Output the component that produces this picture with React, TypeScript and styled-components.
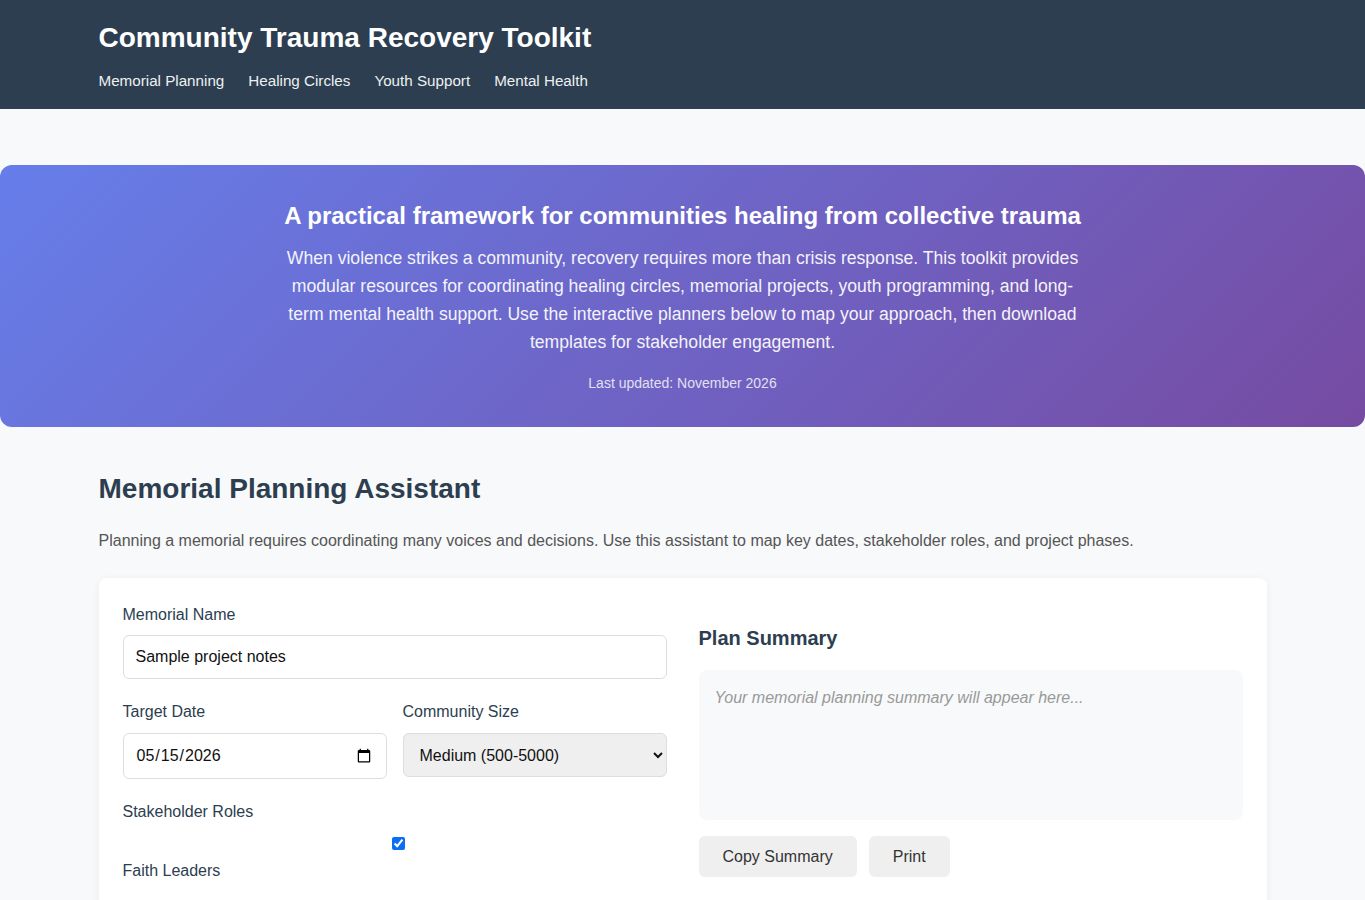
import React from "react";
import styled, { createGlobalStyle } from "styled-components";

const Global = createGlobalStyle`
  * { box-sizing: border-box; }
  html, body { margin: 0; padding: 0; }
  body {
    background: #f8f9fa;
    font-family: "Liberation Sans", Arial, sans-serif;
    color: #333;
    line-height: 1.6;
  }
`;

const Header = styled.header`
  background: #2c3e50;
  color: #fff;
  padding: 17px 0 16px;
`;

const Container = styled.div`
  max-width: 1200px;
  margin: 0 auto;
  padding: 0 16px;
`;

const SiteTitle = styled.h1`
  margin: 0;
  font-size: 28px;
  line-height: 42px;
  font-weight: 700;
`;

const Nav = styled.nav`
  display: flex;
  gap: 24px;
  margin-top: 10px;
`;

const NavLink = styled.a`
  color: #ecf0f1;
  text-decoration: none;
  font-size: 15.2px;
  line-height: 24px;
`;

const Hero = styled.section`
  margin-top: 56px;
  background: linear-gradient(135deg, #667eea 0%, #764ba2 100%);
  border-radius: 12px;
  padding: 32px 16px 33px;
  color: #fff;
  text-align: center;
`;

const HeroTitle = styled.h2`
  margin: 0 0 9px;
  font-size: 24px;
  line-height: 38px;
  font-weight: 700;
`;

const HeroText = styled.p`
  max-width: 800px;
  margin: 0 auto;
  font-size: 17.6px;
  line-height: 28px;
  opacity: 0.92;
`;

const Updated = styled.p`
  margin: 16px 0 0;
  font-size: 14px;
  line-height: 22px;
  opacity: 0.8;
`;

const SectionTitle = styled.h2`
  margin: 40px 0 17px;
  font-size: 28px;
  line-height: 44px;
  font-weight: 700;
  color: #2c3e50;
`;

const SectionText = styled.p`
  margin: 0 0 24px;
  font-size: 16px;
  line-height: 26px;
  color: #555;
`;

const Card = styled.div`
  background: #fff;
  border-radius: 8px;
  box-shadow: 0 2px 8px rgba(0, 0, 0, 0.06);
  padding: 24px;
  display: grid;
  grid-template-columns: 1fr 1fr;
  gap: 32px;
  min-height: 340px;
`;

const Column = styled.div`
  display: flex;
  flex-direction: column;
`;

const Group = styled.div`
  margin-bottom: 20px;
`;

const Row = styled.div`
  display: grid;
  grid-template-columns: 1fr 1fr;
  gap: 16px;
`;

const Label = styled.label`
  display: block;
  font-size: 16px;
  line-height: 25px;
  color: #2c3e50;
  margin-bottom: 8px;
`;

const TextInput = styled.input<{ $tall?: boolean }>`
  width: 100%;
  padding: 12px;
  border: 1px solid #ddd;
  border-radius: 6px;
  font-family: "Liberation Sans", Arial, sans-serif;
  font-size: 16px;
  color: #111;
  background: #fff;
  ${(p) => (p.$tall ? "height: 46px; margin-top: 1px;" : "")}
`;

const Select = styled.select`
  width: 100%;
  padding: 11px 12px;
  border: 1px solid #ddd;
  border-radius: 6px;
  font-family: "Liberation Sans", Arial, sans-serif;
  font-size: 16px;
  color: #111;
  background: #efefef;
  height: 44px;
  margin-top: 1px;
`;

const CheckRow = styled.div`
  display: flex;
  justify-content: center;
  padding-left: 8px;
  margin-top: 12px;
  height: 14px;
  align-items: center;
`;

const Check = styled.input`
  width: 13px;
  height: 13px;
  margin: 0;
  accent-color: #0b6cf5;
`;

const CheckText = styled.div`
  margin-top: 8px;
  font-size: 16px;
  line-height: 25px;
  color: #2c3e50;
`;

const SummaryTitle = styled.h3`
  margin: 20px 0 16px;
  font-size: 20px;
  line-height: 32px;
  font-weight: 700;
  color: #2c3e50;
`;

const SummaryBox = styled.div`
  background: #f8f9fa;
  border-radius: 8px;
  padding: 16px;
  height: 150px;
  font-size: 16px;
  line-height: 24px;
  font-style: italic;
  color: #999;
`;

const Buttons = styled.div`
  display: flex;
  gap: 12px;
  margin-top: 16px;
`;

const Button = styled.button`
  background: #efefef;
  border: none;
  border-radius: 6px;
  padding: 0 24px;
  height: 41px;
  font-family: "Liberation Sans", Arial, sans-serif;
  font-size: 16px;
  color: #333;
  cursor: pointer;
`;

export default function App() {
  return (
    <>
      <Global />
      <Header>
        <Container>
          <SiteTitle>Community Trauma Recovery Toolkit</SiteTitle>
          <Nav>
            <NavLink href="#">Memorial Planning</NavLink>
            <NavLink href="#">Healing Circles</NavLink>
            <NavLink href="#">Youth Support</NavLink>
            <NavLink href="#">Mental Health</NavLink>
          </Nav>
        </Container>
      </Header>
      <Hero>
        <HeroTitle>A practical framework for communities healing from collective trauma</HeroTitle>
        <HeroText>
          When violence strikes a community, recovery requires more than crisis response. This toolkit
          provides modular resources for coordinating healing circles, memorial projects, youth
          programming, and long-term mental health support. Use the interactive planners below to map
          your approach, then download templates for stakeholder engagement.
        </HeroText>
        <Updated>Last updated: November 2026</Updated>
      </Hero>
      <Container>
        <SectionTitle>Memorial Planning Assistant</SectionTitle>
        <SectionText>
          Planning a memorial requires coordinating many voices and decisions. Use this assistant to map
          key dates, stakeholder roles, and project phases.
        </SectionText>
        <Card>
          <Column>
            <Group>
              <Label>Memorial Name</Label>
              <TextInput type="text" defaultValue="Sample project notes" />
            </Group>
            <Row>
              <Group>
                <Label>Target Date</Label>
                <TextInput $tall type="date" defaultValue="2026-05-15" />
              </Group>
              <Group>
                <Label>Community Size</Label>
                <Select defaultValue="medium">
                  <option value="small">Small (under 500)</option>
                  <option value="medium">Medium (500-5000)</option>
                  <option value="large">Large (5000+)</option>
                </Select>
              </Group>
            </Row>
            <div>
              <Label>Stakeholder Roles</Label>
              <CheckRow>
                <Check type="checkbox" defaultChecked />
              </CheckRow>
              <CheckText>Faith Leaders</CheckText>
            </div>
          </Column>
          <Column>
            <SummaryTitle>Plan Summary</SummaryTitle>
            <SummaryBox>Your memorial planning summary will appear here...</SummaryBox>
            <Buttons>
              <Button>Copy Summary</Button>
              <Button>Print</Button>
            </Buttons>
          </Column>
        </Card>
      </Container>
    </>
  );
}
